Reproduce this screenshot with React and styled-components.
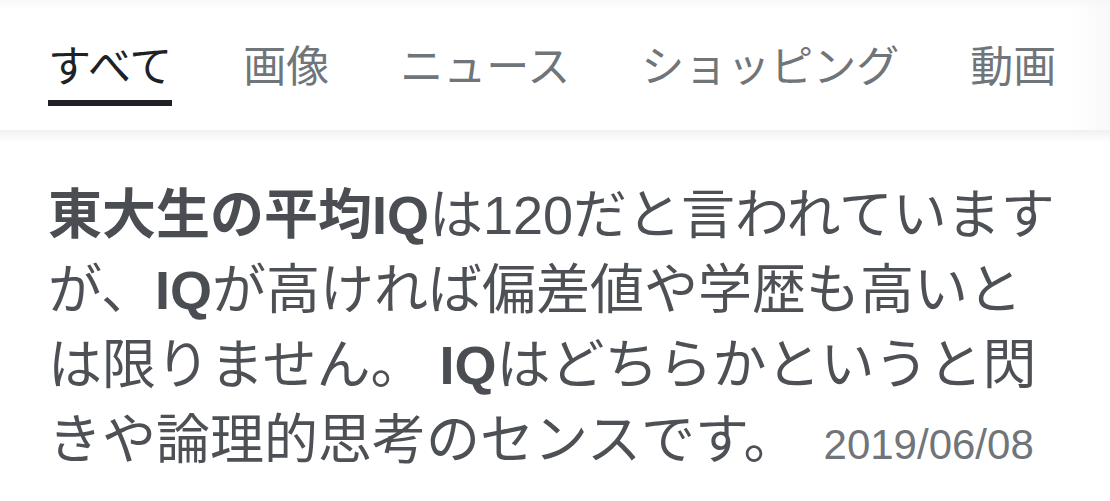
import React from "react";
import styled, { createGlobalStyle } from "styled-components";

const GlobalStyle = createGlobalStyle`
  html, body {
    margin: 0;
    padding: 0;
    background: #ffffff;
  }
  body {
    font-family: "Liberation Sans", "Noto Sans CJK JP", sans-serif;
    -webkit-font-smoothing: antialiased;
  }
`;

const Page = styled.div`
  width: 1110px;
  height: 501px;
  background: #ffffff;
  overflow: hidden;
  display: flex;
  flex-direction: column;
`;

const TabBar = styled.nav`
  position: relative;
  height: 130px;
  flex: 0 0 auto;
  box-sizing: border-box;
  display: flex;
  align-items: flex-start;
  gap: 71px;
  padding: 36px 0 0 48px;
  background: linear-gradient(#f8f8f8 0px, #ffffff 9px);
  font-family: "Noto Sans CJK JP", sans-serif;
  white-space: nowrap;
  &::after {
    content: "";
    position: absolute;
    top: 0;
    right: 0;
    width: 40px;
    height: 130px;
    background: linear-gradient(to right, rgba(255,255,255,0), rgba(246,246,246,0.7));
  }
`;

const Tab = styled.div`
  display: flex;
  flex-direction: column;
  align-items: stretch;
  font-size: 43px;
  line-height: 54px;
  font-weight: 400;
  color: ${(p) => (p.$active ? "#202124" : "#70757a")};
  &::after {
    content: "";
    display: block;
    margin-top: 10px;
    height: 6px;
    background: ${(p) => (p.$active ? "#202124" : "transparent")};
  }
`;

const Shadow = styled.div`
  height: 12px;
  flex: 0 0 auto;
  background: linear-gradient(#f0f0f0, #ffffff);
`;

const Snippet = styled.p`
  margin: 36px 0 0 0;
  padding: 0 48px;
  font-family: "Liberation Sans", "Noto Sans CJK JP", sans-serif;
  font-size: 54px;
  line-height: 75px;
  color: #4d5156;
  white-space: nowrap;
`;

const Em = styled.b`
  font-weight: 700;
  color: #4a4d52;
`;

const DateText = styled.span`
  margin-left: 26px;
  font-family: "Liberation Sans", sans-serif;
  font-size: 42px;
  color: #70757a;
`;

const tabs = ["すべて", "画像", "ニュース", "ショッピング", "動画"];

export default function App() {
  return (
    <Page>
      <GlobalStyle />
      <TabBar>
        {tabs.map((t, i) => (
          <Tab key={t} $active={i === 0}>
            {t}
          </Tab>
        ))}
      </TabBar>
      <Shadow />
      <Snippet>
        <Em>東大生の平均IQ</Em>は120だと言われています
        <br />
        が、<Em>IQ</Em>が高ければ偏差値や学歴も高いと
        <br />
        は限りません。 <Em>IQ</Em>はどちらかというと閃
        <br />
        きや論理的思考のセンスです。
        <DateText>2019/06/08</DateText>
      </Snippet>
    </Page>
  );
}
